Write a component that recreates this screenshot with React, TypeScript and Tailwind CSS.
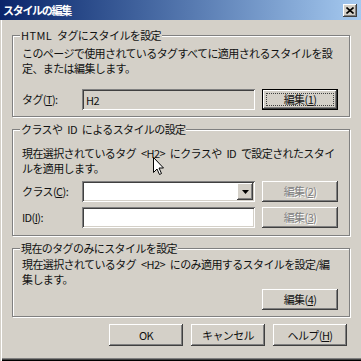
import React from "react";

const raised =
  "shadow-[inset_-1px_-1px_#404040,inset_1px_1px_#ffffff,inset_-2px_-2px_#808080,inset_2px_2px_#d4d0c8]";
const sunken =
  "shadow-[inset_1px_1px_#808080,inset_-1px_-1px_#ffffff,inset_2px_2px_#404040,inset_-2px_-2px_#d4d0c8]";

const SP = "\u2002";

function Group({ title, className, children }: { title: React.ReactNode; className?: string; children: React.ReactNode }) {
  return (
    <div
      className={
        "border border-[#808080] shadow-[inset_1px_1px_#ffffff,1px_1px_#ffffff] pl-[9px] pr-[11px] " +
        (className ?? "")
      }
    >
      <div className="-mt-[7px] -ml-[2px] w-fit bg-[#d4d0c8] px-[1px] leading-[13px] whitespace-nowrap">
        {title}
      </div>
      {children}
    </div>
  );
}

function Btn({
  children,
  disabled,
  def,
  className,
}: {
  children: React.ReactNode;
  disabled?: boolean;
  def?: boolean;
  className?: string;
}) {
  if (def) {
    return (
      <div className={"border border-black bg-[#d4d0c8] " + (className ?? "")}>
        <div className={"h-full w-full p-[3px] " + raised}>
          <div className="h-full w-full border border-dotted border-[#404040] flex items-center justify-center leading-[13px]">
            {children}
          </div>
        </div>
      </div>
    );
  }
  return (
    <div
      className={
        "bg-[#d4d0c8] flex items-center justify-center leading-[13px] " +
        raised +
        " " +
        (disabled ? "text-[#808080] [text-shadow:1px_1px_#ffffff] " : "") +
        (className ?? "")
      }
    >
      {children}
    </div>
  );
}

export default function App() {
  return (
    <div className="relative w-[361px] h-[361px] overflow-hidden bg-[#d4d0c8] text-[#101010] text-[11px] tracking-[-0.6px] font-['Noto_Sans_CJK_JP',sans-serif] shadow-[inset_1px_0_#d4d0c8,inset_2px_0_#ffffff,inset_0_-1px_#000000,inset_0_-2px_#404040,inset_0_-3px_#808080]">
      {/* title bar */}
      <div className="h-[20px] flex items-center bg-gradient-to-r from-[#0a246a] to-[#a6caf0] pl-[3px] pr-[4px]">
        <div className="text-white font-bold tracking-[-1.3px] leading-[13px] whitespace-nowrap">スタイルの編集</div>
        <div className="flex-1" />
        <div className={"w-[14px] h-[13px] bg-[#d4d0c8] flex items-center justify-center " + raised}>
          <svg width="8" height="7" viewBox="0 0 8 7">
            <path d="M0.5 0.5 L7.5 6.5 M7.5 0.5 L0.5 6.5" stroke="#000" strokeWidth="1.6" />
          </svg>
        </div>
      </div>

      <div className="pl-[12px] pr-[11px]">
        {/* group 1 */}
        <Group
          title={
            <>
              <span className="tracking-[0.4px]">HTML</span>
              {SP}タグにスタイルを設定
            </>
          }
          className="mt-[15px] pb-[6px]"
        >
          <div className="mt-[4px] leading-[15px] whitespace-nowrap">
            このページで使用されているタグすべてに適用されるスタイルを設
            <br />
            定、または編集します。
          </div>
          <div className="mt-[13px] flex items-center">
            <div className="w-[60px] whitespace-nowrap">
              タグ(<u>T</u>):
            </div>
            <div className={"w-[173px] h-[21px] bg-[#d4d0c8] flex items-center pl-[4px] pt-[1px] " + sunken}>H2</div>
            <Btn def className="ml-[7px] w-[76px] h-[21px]">
              編集(<u>1</u>)
            </Btn>
          </div>
        </Group>

        {/* group 2 */}
        <Group title={`クラスや${SP}ID${SP}によるスタイルの設定`} className="mt-[12px] pb-[7px]">
          <div className="mt-[10px] leading-[15px] whitespace-nowrap">
            {`現在選択されているタグ${SP}<H2>${SP}にクラスや${SP}ID${SP}で設定されたスタイ`}
            <br />
            ルを適用します。
          </div>
          <div className="mt-[5px] flex items-center">
            <div className="w-[60px] whitespace-nowrap">
              クラス(<u>C</u>):
            </div>
            <div className={"w-[173px] h-[21px] bg-white flex justify-end p-[2px] " + sunken}>
              <div className={"w-[16px] h-full bg-[#d4d0c8] flex items-center justify-center " + raised}>
                <svg width="7" height="4" viewBox="0 0 7 4">
                  <path d="M0 0 H7 L3.5 4 Z" fill="#000" />
                </svg>
              </div>
            </div>
            <Btn disabled className="ml-[7px] w-[76px] h-[21px]">
              編集(<u>2</u>)
            </Btn>
          </div>
          <div className="mt-[5px] flex items-center">
            <div className="w-[60px] whitespace-nowrap">
              ID(<u>I</u>):
            </div>
            <div className={"w-[173px] h-[21px] bg-white " + sunken} />
            <Btn disabled className="ml-[7px] w-[76px] h-[21px]">
              編集(<u>3</u>)
            </Btn>
          </div>
        </Group>

        {/* group 3 */}
        <Group title="現在のタグのみにスタイルを設定" className="mt-[12px] pb-[6px]">
          <div className="mt-[2px] leading-[15px] whitespace-nowrap">
            {`現在選択されているタグ${SP}<H2>${SP}にのみ適用するスタイルを設定/編`}
            <br />
            集します。
          </div>
          <div className="mt-[2px] flex justify-end">
            <Btn className="w-[76px] h-[21px]">
              編集(<u>4</u>)
            </Btn>
          </div>
        </Group>

        {/* bottom buttons */}
        <div className="mt-[7px] flex justify-end gap-[8px] pr-[3px]">
          <Btn className="w-[74px] h-[22px]">OK</Btn>
          <Btn className="w-[74px] h-[22px]">キャンセル</Btn>
          <Btn className="w-[74px] h-[22px]">
            ヘルプ(<u>H</u>)
          </Btn>
        </div>
      </div>

      {/* mouse cursor */}
      <svg className="absolute left-[153px] top-[157px]" width="12" height="19" viewBox="0 0 12 19">
        <path d="M0.5 0.5 L0.5 15.5 L4 12 L6.5 17.5 L8.5 16.5 L6 11 L10.5 11 Z" fill="#fff" stroke="#000" strokeWidth="1" />
      </svg>
    </div>
  );
}
